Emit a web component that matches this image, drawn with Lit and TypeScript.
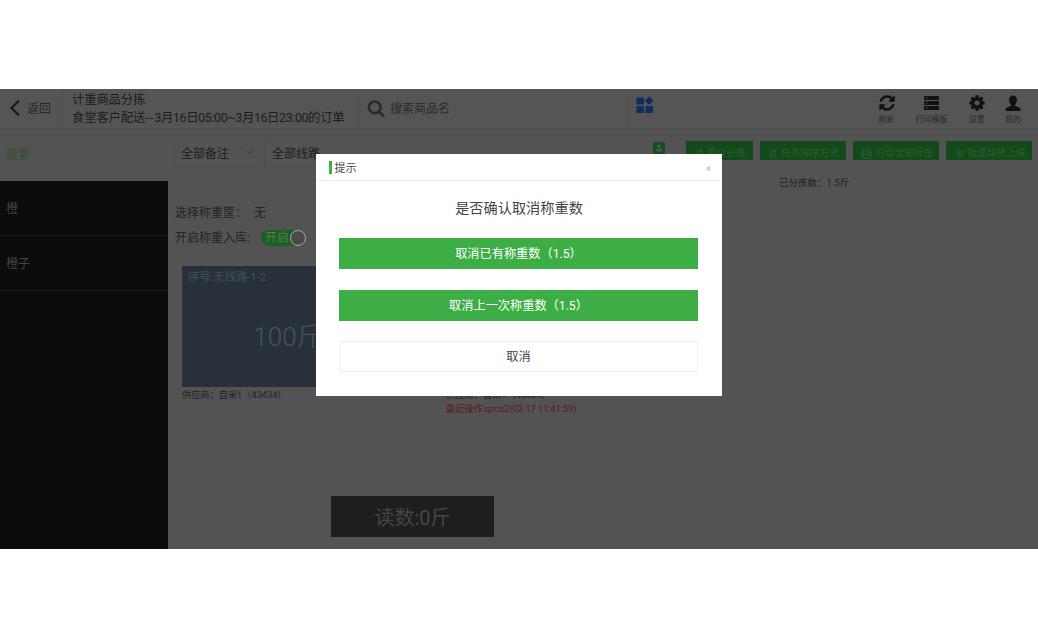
import { LitElement, html, css } from "lit";
import { customElement } from "lit/decorators.js";

const P = {
  refresh: "M1639 1056q0 5-1 7-64 268-268 434.5t-478 166.5q-146 0-282.5-55t-243.5-157l-129 129q-19 19-45 19t-45-19-19-45v-448q0-26 19-45t45-19h448q26 0 45 19t19 45-19 45l-137 137q71 66 161 102t187 36q134 0 250-65t186-179q11-17 53-117 8-23 30-23h192q13 0 22.5 9.5t9.5 22.5zm25-800v448q0 26-19 45t-45 19h-448q-26 0-45-19t-19-45 19-45l138-138q-148-137-349-137-134 0-250 65t-186 179q-11 17-53 117-8 23-30 23h-199q-13 0-22.5-9.5t-9.5-22.5v-7q65-268 270-434.5t480-166.5q146 0 284 55.5t245 156.5l130-129q19-19 45-19t45 19 19 45z",
  cog: "M1152 896q0-106-75-181t-181-75-181 75-75 181 75 181 181 75 181-75 75-181zm512-109v222q0 12-8 23t-20 13l-185 28q-19 54-39 91 35 50 107 138 10 12 10 25t-9 23q-27 37-99 108t-94 71q-12 0-26-9l-138-108q-44 23-91 38-16 136-29 186-7 28-36 28h-222q-14 0-24.5-8.5t-11.5-21.5l-28-184q-49-16-90-37l-141 107q-10 9-25 9-14 0-25-11-126-114-165-168-7-10-7-23 0-12 8-23 15-21 51-66.5t54-70.5q-27-50-41-99l-183-27q-13-2-21-12.5t-8-23.5v-222q0-12 8-23t19-13l186-28q14-46 39-92-40-57-107-138-10-12-10-24 0-10 9-23 26-36 98.5-107.5t94.5-71.5q13 0 26 10l138 107q44-23 91-38 16-136 29-186 7-28 36-28h222q14 0 24.5 8.5t11.5 21.5l28 184q49 16 90 37l142-107q9-9 24-9 13 0 25 10 129 119 165 170 7 8 7 22 0 12-8 23-15 21-51 66.5t-54 70.5q26 50 41 98l183 28q13 2 21 12.5t8 23.5z",
  search: "M1216 832q0-185-131.5-316.5t-316.5-131.5-316.5 131.5-131.5 316.5 131.5 316.5 316.5 131.5 316.5-131.5 131.5-316.5zm512 832q0 52-38 90t-90 38q-54 0-90-38l-343-342q-179 124-399 124-143 0-273.5-55.5t-225-150-150-225-55.5-273.5 55.5-273.5 150-225 225-150 273.5-55.5 273.5 55.5 225 150 150 225 55.5 273.5q0 220-124 399l343 343q37 37 37 90z",
};
const fa = (d: string, s: number) =>
  html`<svg width=${s} height=${s} viewBox="0 0 1792 1792" fill="currentColor"><path d=${d}></path></svg>`;

const sortIcon = html`<svg width="8" height="11" viewBox="0 0 8 11" fill="none" stroke="currentColor" stroke-width="1.1"><path d="M2.2 1v8M.6 7l1.6 2.4L3.8 7M5.8 10V2M4.2 3.8l1.6-2.3 1.6 2.3"></path></svg>`;
const printIcon = html`<svg width="11" height="11" viewBox="0 0 11 11" fill="none" stroke="currentColor" stroke-width="1"><path d="M2.5 4V1h6v3M2.5 8H.8V4h9.4v4H8.5M2.5 6.5h6V10h-6z"></path></svg>`;
const bugIcon = html`<svg width="9" height="11" viewBox="0 0 9 11" fill="none" stroke="currentColor" stroke-width="1"><path d="M4.5 1.5l3.7 4-3.7 4-3.7-4zM4.5 3.5v4M2.6 5.5h3.8"></path></svg>`;

@customElement("app-root")
export class AppRoot extends LitElement {
  static styles = css`
    :host { display: block; height: 638px; background: #fff; overflow: hidden;
      font-family: Roboto, "Noto Sans CJK SC", sans-serif; }
    .stage { position: relative; margin-top: 89px; height: 460px; background: #535353;
      display: flex; flex-direction: column; overflow: hidden; color: #222; }

    .head { height: 39px; display: flex; align-items: stretch; background: #555; border-bottom: 1px solid #4e4e4e; flex: none; }
    .back { width: 64px; flex: none; display: flex; align-items: center; gap: 6px; padding: 0 0 2px 9px; box-sizing: border-box;
      border-right: 1px solid #505050; font-size: 12px; color: #262626; }
    .title { width: 294px; flex: none; padding: 2px 0 0 8px; box-sizing: border-box; font-size: 12.4px; letter-spacing: -0.2px; line-height: 18px; color: #1c1c1c;
      border-right: 1px solid #505050; white-space: nowrap; }
    .dash { letter-spacing: 1.2px; }
    .when { letter-spacing: -0.37px; }
    .search { width: 270px; flex: none; display: flex; align-items: center; gap: 5px; padding: 0 0 2px 9px; box-sizing: border-box;
      font-size: 12px; color: #2b2b2b; border-right: 1px solid #505050; }
    .search svg { color: #2a2a2a; }
    .apps { flex: none; padding: 7px 0 0 8px; width: 60px; box-sizing: border-box; }
    .tools { margin-left: auto; display: flex; padding-right: 2px; }
    .tool { display: flex; flex-direction: column; align-items: center; font-size: 8px; line-height: 10px; color: #2a2a2a; padding-top: 5px; box-sizing: border-box; white-space: nowrap; }
    .tool svg { color: #111; display: block; margin-bottom: 3px; height: 18px; }
    .t1 { width: 45px; } .t2 { width: 45px; margin-right: 1px; } .t3 { width: 45px; margin-left: -1px; margin-right: 1px; } .t4 { width: 30px; margin-left: -2px; margin-right: 8px; }

    .bar { height: 52px; flex: none; display: flex; align-items: flex-start; position: relative; }
    .name { width: 168px; flex: none; box-sizing: border-box; padding: 17px 0 0 6px; font-size: 12px; line-height: 18px; color: #35502a; }
    .sel { margin-top: 11px; height: 27px; box-sizing: border-box; border: 1px solid #505050; display: flex; align-items: center; justify-content: space-between;
      padding: 0 6px 2px; font-size: 12px; color: #1e1e1e; white-space: nowrap; }
    .s1 { width: 85px; margin-left: 6px; }
    .s2 { width: 109px; margin-left: 5px; padding-left: 7px; }
    .chev { width: 5px; height: 5px; border-right: 1px solid #444; border-bottom: 1px solid #444; transform: rotate(45deg) translate(-2px,-2px); margin-right: -1px; }
    .mid { flex: 1; display: flex; justify-content: flex-end; padding-top: 13px; padding-right: 21px; color: #164e1d; }
    .mid svg { flex: none; }
    .btns { display: flex; gap: 7px; margin-top: 12px; margin-right: 6px; flex: none; }
    .btn { height: 19px; background: #134a1b; color: #2a5e30; font-size: 9.6px; line-height: 24px; display: flex; align-items: flex-start; justify-content: center; gap: 4px; padding-left: 2px; box-sizing: border-box; white-space: nowrap; }
    .btn svg { margin-top: 7px; flex: none; }
    .b1 { width: 67px; } .b2, .b3, .b4 { width: 86px; }

    .body { flex: 1; display: flex; min-height: 0; }
    .side { width: 168px; flex: none; background: #0b0c0e; }
    .row { border-bottom: 1px solid #1a1b1d; padding: 19px 0 0 6px; height: 35px; font-size: 12px; line-height: 18px; color: #444; }
    .main { flex: 1; position: relative; display: flex; flex-direction: column; padding: 23px 0 12px 7px; min-width: 0; }
    .line { display: flex; align-items: center; font-size: 12px; color: #242424; height: 18px; line-height: 18px; white-space: nowrap; }
    .line + .line { margin-top: 7px; }
    .gap { margin-left: 7px; }
    .sw { margin-left: 11px; width: 45px; height: 16px; border-radius: 8px; background: #1a5f24; display: flex; align-items: center; justify-content: space-between; padding: 0 0 0 4px; box-sizing: border-box; font-size: 12px; color: #4f7f54; }
    .knob { width: 16px; height: 16px; border-radius: 50%; background: #4a4a4a; border: 1px solid #a8a8a8; box-sizing: border-box; flex: none; }
    .done { position: absolute; left: 611px; top: -7px; font-size: 9.5px; color: #222; line-height: 18px; white-space: nowrap; }
    .cards { display: flex; gap: 52px; margin: 19px 0 0 7px; }
    .card { width: 212px; }
    .tile { height: 121px; background: #28313a; box-sizing: border-box; padding: 5px 6px; font-size: 11.3px; line-height: 14px; color: #454e58; }
    .big { display: block; text-align: center; font-size: 26px; line-height: 32px; margin-top: 36px; color: #4a535d; font-weight: 300; }
    .sup { font-size: 9.2px; line-height: 14px; margin-top: 1px; color: #222; white-space: nowrap; }
    .rec { font-size: 9.2px; line-height: 14px; color: #5a1a1a; white-space: nowrap; }
    .read { margin: auto 0 0 156px; width: 163px; height: 41px; background: #1e1e1e; color: #454545; font-size: 20px; line-height: 44px; text-align: center; flex: none; }

    .modal { position: absolute; left: 316px; top: 65px; width: 406px; height: 242px; background: #fff; display: flex; flex-direction: column; }
    .mhead { height: 27px; flex: none; box-sizing: border-box; border-bottom: 1px solid #eee; display: flex; align-items: center; padding: 0 11px 0 13px; font-size: 11px; color: #444; }
    .mbar { width: 2.5px; height: 13px; background: #3dae45; margin-right: 3px; }
    .x { margin-left: auto; font-size: 10px; color: #bbb; line-height: 12px; margin-top: 4px; }
    .msg { text-align: center; font-size: 14.2px; line-height: 20px; color: #444; margin-top: 17px; }
    .act { margin: 20px 24px 0 23px; display: flex; flex-direction: column; gap: 20.5px; }
    .a { height: 31px; line-height: 33px; text-align: center; font-size: 12.2px; font-weight: 400; color: #fff; background: #3dae45; }
    .c { background: #fff; color: #444; border: 1px solid #f0f0f0; box-sizing: border-box; line-height: 31px; }
  `;

  render() {
    return html`<div class="stage">
      <div class="head">
        <div class="back">
          <svg width="12" height="18" viewBox="0 0 12 18" fill="none" stroke="#1a1a1a" stroke-width="2.2"><path d="M10 1.5L2.5 9l7.500 7.500"></path></svg>
          <span>返回</span>
        </div>
        <div class="title">计重商品分拣<br />食堂客户配送<span class="dash">--</span><span class="when">3月16日05:00~3月16日23:00的订单</span></div>
        <div class="search">${fa(P.search, 18)}<span>搜索商品名</span></div>
        <div class="apps">
          <svg width="18" height="18" viewBox="0 0 18 18" fill="#0d2f5a">
            <rect x="0.5" y="1.5" width="7.5" height="7"></rect>
            <rect x="0.5" y="10" width="7.5" height="7"></rect>
            <rect x="9.5" y="10" width="7.5" height="7"></rect>
            <path d="M13.2 0.5l4.3 4.3-4.3 4.3-4.3-4.3z"></path>
          </svg>
        </div>
        <div class="tools">
          <div class="tool t1">${fa(P.refresh, 18)}<span>刷新</span></div>
          <div class="tool t2">
            <svg width="17" height="18" viewBox="0 0 17 18" fill="#111"><rect x="1" y="2" width="15" height="4" rx="0.6"></rect><rect x="1" y="7" width="15" height="4" rx="0.6"></rect><rect x="1" y="12" width="15" height="4" rx="0.6"></rect><path fill="#555" d="M3 3.5h1.5v1H3zM3 8.5h1.5v1H3zM3 13.5h1.5v1H3z"></path></svg>
            <span>打印模板</span>
          </div>
          <div class="tool t3">${fa(P.cog, 18)}<span>设置</span></div>
          <div class="tool t4">
            <svg width="16" height="18" viewBox="0 0 16 18" fill="#111"><path d="M8 1.500c2.400 0 4 1.900 4 4.400 0 1.700-.7 3.300-1.800 4.300v1.300c0 .6 1.300 1 2.800 1.600 1.400.6 2.500 1 2.500 2.200V17H.5v-1.700c0-1.200 1.100-1.600 2.500-2.200 1.500-.6 2.800-1 2.800-1.600v-1.300C4.700 9.200 4 7.600 4 5.900 4 3.400 5.600 1.500 8 1.500z"></path></svg>
            <span>我的</span>
          </div>
        </div>
      </div>

      <div class="bar">
        <div class="name">菠萝</div>
        <div class="sel s1"><span>全部备注</span><i class="chev"></i></div>
        <div class="sel s2"><span>全部线路</span></div>
        <div class="mid">
          <svg width="12" height="12" viewBox="0 0 12 12" fill="currentColor"><path fill-rule="evenodd" d="M1 0h10a1 1 0 0 1 1 1v10a1 1 0 0 1-1 1H1a1 1 0 0 1-1-1V1a1 1 0 0 1 1-1zM6 2.500a1.800 1.800 0 1 0 0 3.600 1.800 1.800 0 0 0 0-3.600zM2.500 9.500h7V8.600C9.500 7.600 8 7 6 7s-3.500.6-3.500 1.600z"></path></svg>
        </div>
        <div class="btns">
          <div class="btn b1">${sortIcon}<span>图片分拣</span></div>
          <div class="btn b2">${sortIcon}<span>任务排序方式</span></div>
          <div class="btn b3">${printIcon}<span>打印全部标签</span></div>
          <div class="btn b4">${bugIcon}<span>批量缺货上报</span></div>
        </div>
      </div>

      <div class="body">
        <div class="side">
          <div class="row">橙</div>
          <div class="row">橙子</div>
        </div>
        <div class="main">
          <div class="done">已分拣数：1.5斤</div>
          <div class="line"><span>选择称重筐：</span><span class="gap">无</span></div>
          <div class="line"><span>开启称重入库:</span><div class="sw"><span>开启</span><i class="knob"></i></div></div>
          <div class="cards">
            <div class="card">
              <div class="tile">序号:无线路-1-2<span class="big">100斤</span></div>
              <div class="sup">供应商：自采1（43434）</div>
            </div>
            <div class="card">
              <div class="tile">序号:无线路-1-1<span class="big">1.5斤</span></div>
              <div class="sup">供应商：自采1（43434）</div>
              <div class="rec">最近操作:qzcs2(03-17 11:41:59)</div>
            </div>
          </div>
          <div class="read">读数:0斤</div>
        </div>
      </div>

      <div class="modal">
        <div class="mhead"><i class="mbar"></i><span>提示</span><span class="x">×</span></div>
        <div class="msg">是否确认取消称重数</div>
        <div class="act">
          <div class="a">取消已有称重数（1.5）</div>
          <div class="a">取消上一次称重数（1.5）</div>
          <div class="a c">取消</div>
        </div>
      </div>
    </div>`;
  }
}
